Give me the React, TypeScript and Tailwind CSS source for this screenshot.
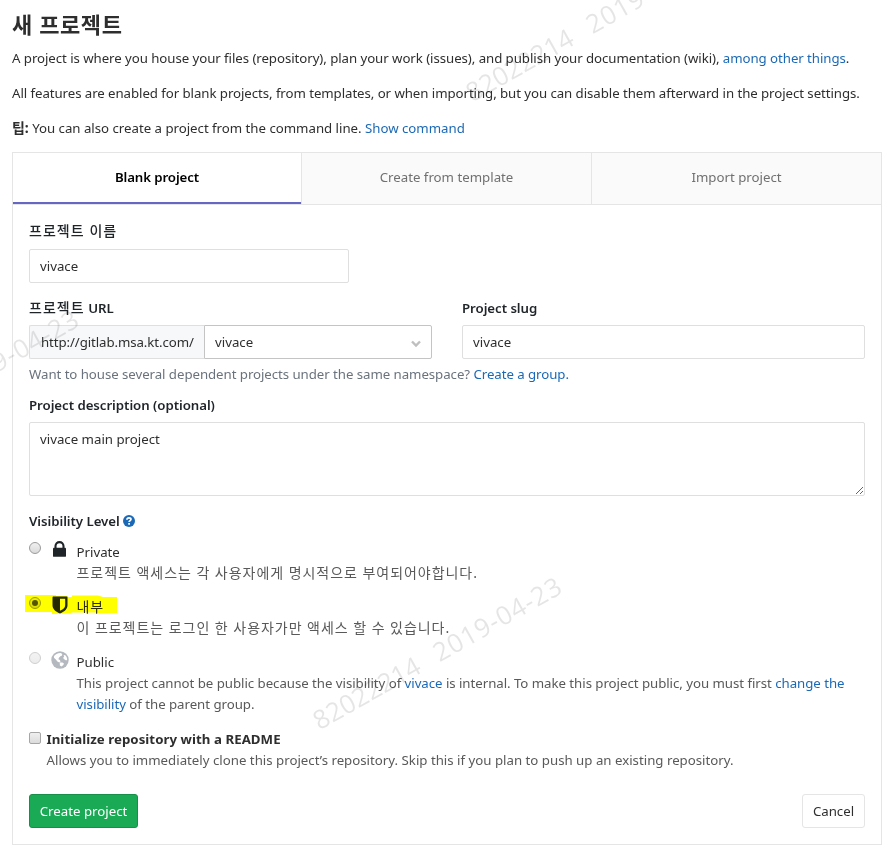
import React from "react";

const Link = ({ children }: { children: React.ReactNode }) => (
  <a href="#" className="text-[#1b69b6]">
    {children}
  </a>
);

function Radio({ checked, disabled }: { checked?: boolean; disabled?: boolean }) {
  return (
    <span
      className={
        "flex h-[12px] w-[12px] shrink-0 items-center justify-center rounded-full border bg-linear-to-b " +
        (disabled ? "border-[#cfcfcf] from-[#f3f3f3] to-[#ececec]" : "border-[#9b9b9b] from-[#f0f0f0] to-[#dadada]")
      }
    >
      {checked && <span className="h-[6px] w-[6px] rounded-full bg-[#555]" />}
    </span>
  );
}

const LockIcon = () => (
  <svg width="14" height="16" viewBox="0 0 14 16" className="text-[#1f2429]">
    <path d="M2.500 8V5.100a4 4 0 0 1 8 0V8" fill="none" stroke="currentColor" strokeWidth="2.100" />
    <rect x="0" y="6.800" width="13" height="9" rx="0.9" fill="currentColor" />
  </svg>
);

const ShieldIcon = () => (
  <svg width="16" height="18" viewBox="0 0 16 18" className="text-[#24292e]">
    <path
      fillRule="evenodd"
      fill="currentColor"
      d="M1.3 0.6h13.4a.8.8 0 0 1 .8.8v7.8c0 3.5-2.6 6.2-7.5 8.3C3.1 15.400.5 12.700.5 9.200V1.400a.8.8 0 0 1 .8-.8zM8 2.800v12c3.700-1.800 5.200-3.500 5.200-5.900V2.800z"
    />
  </svg>
);

const EarthIcon = () => (
  <svg width="18" height="18" viewBox="0 0 18 18">
    <circle cx="9" cy="9" r="8.700" fill="#b4b8bf" />
    <path d="M2.900 5.300C4.200 3.100 6.700 1.800 9.700 1.900l1.600 1.200-.5 1.600-1.500.6-1.500 1.700-.4 1.300 1.500.6.600 1.500-1.200 1.200-1.900-1-1.800-2.400-1.500-1.300z" fill="#fff" />
    <path d="M12.600 3.900l1.700.3c1.200 1.200 1.900 2.800 1.900 4.600l-1 .7-1.700-.9-1.400-1.700 1-1.400zM8.700 11.600l2.700-.2 1.500 1.200-.5 1.500-1.900 1.300-1.600-.9z" fill="#fff" />
  </svg>
);

const HelpIcon = () => (
  <svg width="12" height="12" viewBox="0 0 12 12" className="ml-[3px]">
    <circle cx="6" cy="6" r="6" fill="#1b69b6" />
    <path d="M3.900 4.700C4 3.400 4.800 2.800 6 2.800c1.200 0 2 .6 2 1.500 0 1.300-1.900 1.300-1.900 2.800" fill="none" stroke="#fff" strokeWidth="1.700" />
    <rect x="5.200" y="8" width="1.800" height="1.700" fill="#fff" />
  </svg>
);

const Label = ({ children }: { children: React.ReactNode }) => (
  <label className="block h-[20px] font-semibold leading-[20px] tracking-[-0.050px] text-[#1f2429]">{children}</label>
);

const Ko = ({ children }: { children: string }) => <span className="text-[14px] tracking-[0.960px]">{children}</span>;
const KoLabel = ({ children }: { children: string }) => <span className="text-[14px] font-medium tracking-[1.050px]">{children}</span>;

const Watermark = ({ className, id, date }: { className: string; id?: string; date: string }) => (
  <span
    className={
      "pointer-events-none absolute flex origin-bottom-left -rotate-[29.500deg] gap-[19px] whitespace-pre font-['Open_Sans','Noto_Sans',sans-serif] text-[26px] leading-[26px] text-black/10 " +
      className
    }
  >
    {id && <span>{id}</span>}
    <span className="tracking-[0.800px]">{date}</span>
  </span>
);

export default function App() {
  return (
    <div className="relative h-[856px] w-[896px] overflow-hidden whitespace-nowrap bg-white pl-[12px] font-['Noto_Sans','Noto_Sans_CJK_KR',sans-serif] text-[13.250px] leading-[20px] text-[#2e2e2e]">
      <h1 className="h-[48px] pt-[9px] text-[22px] font-bold leading-[30px] tracking-[0.600px]">
        <span>새 프로젝트</span>
      </h1>
      <p className="h-[35px] tracking-[-0.060px]">
        <span>
          A project is where you house your files (repository), plan your work (issues), and publish your documentation (wiki),{" "}
          <Link>among other things</Link>.
        </span>
      </p>
      <p className="h-[35px] tracking-[-0.067px]">
        <span>All features are enabled for blank projects, from templates, or when importing, but you can disable them afterward in the project settings.</span>
      </p>
      <p className="h-[34px] tracking-[-0.020px]">
        <span>
          <b className="text-[14px]">팁:</b> You can also create a project from the command line. <Link>Show command</Link>
        </span>
      </p>

      <div className="h-[693px] w-[870px] border border-[#e5e5e5]">
        <div className="flex h-[52px] border-b border-[#e5e5e5] text-center leading-[48px] text-[#707070]">
          <div className="w-[288px] border-b-2 border-[#6666c4] font-semibold tracking-[-0.100px] text-black">Blank project</div>
          <div className="w-[290px] border-l border-[#e5e5e5] bg-[#fafafa]">Create from template</div>
          <div className="flex-1 border-l border-[#e5e5e5] bg-[#fafafa]">Import project</div>
        </div>

        <form className="px-[16px] pt-[16px]">
          <Label><KoLabel>프로젝트 이름</KoLabel></Label>
          <input
            defaultValue="vivace"
            className="mt-[8px] block h-[34px] w-[320px] rounded-[2px] border border-[#dfdfdf] px-[10px]"
          />

          <div className="mt-[15px] flex gap-[30px]">
            <div className="w-[403px]">
              <Label><KoLabel>프로젝트</KoLabel> URL</Label>
              <div className="mt-[7px] flex h-[34px]">
                <span className="w-[175px] rounded-l-[2px] border border-r-0 border-[#dfdfdf] bg-[#f6f8fa] pl-[11px] leading-[32px] tracking-[-0.090px]">
                  http://gitlab.msa.kt.com/
                </span>
                <span className="flex flex-1 items-center justify-between rounded-r-[2px] border border-[#c4c4c4] pl-[10px] pr-[10px]">
                  vivace
                  <svg width="10" height="8" viewBox="0 0 10 8" className="mt-[3px]">
                    <path d="M1 1.500l4 4 4-4" fill="none" stroke="#bfbfbf" strokeWidth="2.400" />
                  </svg>
                </span>
              </div>
            </div>
            <div className="w-[403px]">
              <Label>Project slug</Label>
              <input
                defaultValue="vivace"
                className="mt-[7px] block h-[34px] w-full rounded-[2px] border border-[#dfdfdf] px-[10px]"
              />
            </div>
          </div>
          <p className="mt-[5px] h-[31px] tracking-[-0.055px] text-[#6a737d]">
            <span>
              Want to house several dependent projects under the same namespace? <Link>Create a group.</Link>
            </span>
          </p>

          <Label>Project description (optional)</Label>
          <textarea
            defaultValue="vivace main project"
            className="mt-[7px] block h-[74px] w-[836px] rounded-[2px] border border-[#dfdfdf] px-[10px] py-[6px]"
          />

          <div className="mt-[15px] flex items-center font-semibold tracking-[-0.050px] text-[#1f2429]">
            Visibility Level
            <HelpIcon />
          </div>

          <div className="mt-[11px] flex h-[55px]">
            <Radio />
            <span className="-mt-px ml-[12px] w-[23.500px]">
              <LockIcon />
            </span>
            <div>
              <div className="h-[21px]"><span>Private</span></div>
              <div className="text-[#595959]"><Ko>프로젝트 액세스는 각 사용자에게 명시적으로 부여되어야합니다.</Ko></div>
            </div>
          </div>
          <div className="relative flex h-[55px]">
            <Radio checked />
            <span className="-mt-px ml-[11px] w-[24.500px]">
              <ShieldIcon />
            </span>
            <div>
              <div className="h-[21px]"><Ko>내부</Ko></div>
              <div className="text-[#595959]"><Ko>이 프로젝트는 로그인 한 사용자가만 액세스 할 수 있습니다.</Ko></div>
            </div>
            <svg className="absolute left-[-4px] top-[-2px] mix-blend-multiply" width="92" height="20" viewBox="0 0 92 20">
              <path d="M0 0h31v1h12v1h4V.500h26l5 1.500h14v16l-16 .500-5-1H46v1l-19 .500v-2H0z" fill="#ffff00" />
            </svg>
          </div>
          <div className="flex h-[77px]">
            <Radio disabled />
            <span className="-mt-px ml-[10px] w-[25.500px]">
              <EarthIcon />
            </span>
            <div>
              <div className="h-[21px]"><span>Public</span></div>
              <div className="leading-[21px] tracking-[-0.040px] text-[#595959]">
                <span>
                  This project cannot be public because the visibility of <Link>vivace</Link> is internal. To make this project public, you must first <Link>change the</Link>
                </span>
                <br />
                <span>
                  <Link>visibility</Link> of the parent group.
                </span>
              </div>
            </div>
          </div>

          <div className="flex">
            <span className="mt-[3px] h-[12px] w-[12px] shrink-0 rounded-[2px] border border-[#a6a6a6] bg-linear-to-b from-[#efefef] to-[#dcdcdc]" />
            <div className="ml-[5.500px]">
              <div className="h-[21px] font-bold tracking-[0.050px]"><span>Initialize repository with a README</span></div>
              <div className="text-[#595959]"><span>Allows you to immediately clone this project’s repository. Skip this if you plan to push up an existing repository.</span></div>
            </div>
          </div>

          <div className="mt-[24px] flex justify-between">
            <button type="button" className="h-[34px] w-[109px] rounded-[3px] border border-[#168f48] bg-[#1aaa55] text-white">
              Create project
            </button>
            <button type="button" className="h-[34px] w-[63px] rounded-[3px] border border-[#e5e5e5] bg-white">
              Cancel
            </button>
          </div>
        </form>
      </div>

      <Watermark className="left-[474px] top-[79px]" id="82022214" date="2019-" />
      <Watermark className="left-[321px] top-[707px]" id="82022214" date="2019-04-23" />
      <Watermark className="left-[-1px] top-[349px]" date="9-04-23" />
    </div>
  );
}
